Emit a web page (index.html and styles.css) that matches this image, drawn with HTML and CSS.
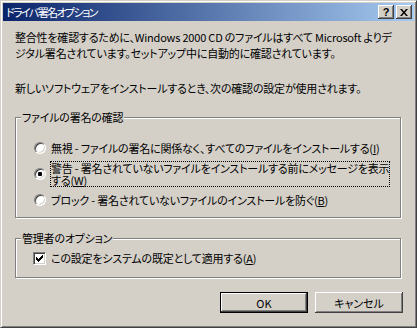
FILE: index.html
```html
<!doctype html>
<html>
<head>
<meta charset="utf-8">
<title>ドライバ署名オプション</title>
<link rel="stylesheet" href="styles.css">
</head>
<body>
<div class="window">
	<div class="titlebar">
		<span class="title">ドライバ署名オプション</span>
		<button class="cap-btn help">?</button>
		<button class="cap-btn close"><svg width="8" height="7" viewBox="0 0 8 7"><path d="M0 0h2l2 2.5L6 0h2L5 3.5 8 7H6L4 4.5 2 7H0l3-3.5z" fill="#000"/></svg></button>
	</div>
	<div class="content">
		<p class="intro">整合性を確認するために、Windows 2000 CD のファイルはすべて Microsoft よりデ<br>ジタル署名されています。セットアップ中に自動的に確認されています。</p>
		<p class="note">新しいソフトウェアをインストールするとき、次の確認の設定が使用されます。</p>

		<div class="group group-verify">
			<div class="group-title">ファイルの署名の確認</div>
			<div class="options">
				<label class="option"><span class="radio"></span><span class="opt-text">無視 - ファイルの署名に関係なく、すべてのファイルをインストールする(<u>I</u>)</span></label>
				<label class="option option-tall"><span class="radio checked"><span class="dot"></span></span><span class="opt-text focus">警告 - 署名されていないファイルをインストールする前にメッセージを表示<br>する(<u>W</u>)</span></label>
				<label class="option"><span class="radio"></span><span class="opt-text">ブロック - 署名されていないファイルのインストールを防ぐ(<u>B</u>)</span></label>
			</div>
		</div>

		<div class="group group-admin">
			<div class="group-title">管理者のオプション</div>
			<label class="check-row">
				<span class="checkbox"><svg width="7" height="7" viewBox="0 0 7 7" shape-rendering="crispEdges" fill="#000"><rect x="0" y="2" width="1" height="3"/><rect x="1" y="3" width="1" height="3"/><rect x="2" y="4" width="1" height="3"/><rect x="3" y="3" width="1" height="3"/><rect x="4" y="2" width="1" height="3"/><rect x="5" y="1" width="1" height="3"/><rect x="6" y="0" width="1" height="3"/></svg></span>
				<span class="opt-text">この設定をシステムの既定として適用する(<u>A</u>)</span>
			</label>
		</div>

		<div class="actions">
			<button class="btn btn-default">OK</button>
			<button class="btn">キャンセル</button>
		</div>
	</div>
</div>
</body>
</html>
```

FILE: styles.css
```css
*{ margin:0; padding:0; box-sizing:border-box;}
body{ background:#D4D0C8; font-family:"Noto Sans CJK JP","Liberation Sans",sans-serif; font-size:11px; letter-spacing:-0.2px; color:#000; font-feature-settings:"palt";}

.window{ width:417px; height:328px; padding:2px; background:#D4D0C8; border:1px solid; border-color:#D4D0C8 #404040 #404040 #D4D0C8; box-shadow:inset 1px 1px #fff, inset -1px -1px #808080; display:flex; flex-direction:column;}

.titlebar{ height:18px; flex:none; display:flex; align-items:center; padding:0 2px 0 3px; background:linear-gradient(to right,#0A246A,#A6CAF0);}
.title{ flex:1; color:#fff; line-height:18px; white-space:nowrap; letter-spacing:-1.6px;}
.cap-btn{ width:16px; height:14px; border:0; background:#D4D0C8; display:flex; align-items:center; justify-content:center; font-family:"Liberation Sans",sans-serif; font-weight:bold; font-size:11px; line-height:14px; letter-spacing:0; box-shadow:inset -1px -1px #404040, inset 1px 1px #fff, inset -2px -2px #808080;}
.help{ margin-right:2px;}

.content{ flex:1; display:flex; flex-direction:column; padding:8px 13px 0 12px;}
.intro{ line-height:16px; white-space:nowrap;}
.note{ margin-top:19px; line-height:16px; white-space:nowrap;}

.group{ border:1px solid #808080; box-shadow:inset 1px 1px #fff, 1px 1px #fff;}
.group-title{ width:fit-content; margin:-8px 0 0 5px; padding:0 1px; line-height:14px; background:#D4D0C8;}
.group-verify{ margin-top:21px; padding-bottom:5px;}
.group-admin{ margin-top:20px; padding-bottom:12px;}

.options{ display:flex; flex-direction:column; gap:1px; margin-top:12px; padding-left:18px;}
.option{ height:24px; display:flex; align-items:center; gap:4px; white-space:nowrap;}
.option-tall{ height:26px;}
.opt-text{ border:1px solid transparent; line-height:12px;}
.opt-text.focus{ border:1px dotted #000;}

.radio{ width:12px; height:12px; flex:none; border-radius:50%; background:#fff; border:1px solid; border-color:#808080 #fff #fff #808080; box-shadow:inset 1px 1px #404040, inset -1px -1px #D4D0C8; display:flex; align-items:center; justify-content:center;}
.dot{ width:4px; height:4px; border-radius:1px; background:#000;}

.check-row{ height:14px; margin-top:6px; padding-left:17px; display:flex; align-items:center; gap:4px; white-space:nowrap;}
.checkbox{ width:13px; height:13px; flex:none; background:#fff; border:1px solid; border-color:#808080 #fff #fff #808080; box-shadow:inset 1px 1px #404040, inset -1px -1px #D4D0C8; display:flex; align-items:center; justify-content:center;}

.actions{ display:flex; justify-content:flex-end; gap:7px; margin:14px -2px 0 0;}
.btn{ width:88px; height:21px; font:inherit; background:#D4D0C8; border:0; box-shadow:inset -1px -1px #404040, inset 1px 1px #fff, inset -2px -2px #808080;}
.btn-default{ border:1px solid #000;}
```
